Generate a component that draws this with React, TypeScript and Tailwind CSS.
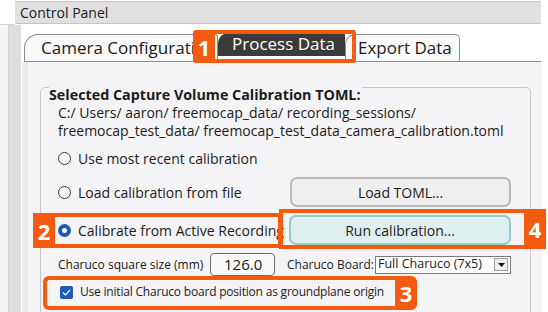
import React from 'react';

const ORANGE = 'border-[#f45b10]';

function Radio({ checked }: { checked?: boolean }) {
  if (checked) {
    return (
      <span className="w-[13px] h-[13px] rounded-full bg-[#1a5bb8] flex items-center justify-center shrink-0">
        <span className="w-[5px] h-[5px] rounded-full bg-white" />
      </span>
    );
  }
  return <span className="w-[13px] h-[13px] rounded-full border border-[#3a3a3a] bg-[#f7f7f7] shrink-0" />;
}

function Callout({ n, className, labelSide = 'left' }: { n: string; className: string; labelSide?: 'left' | 'right' }) {
  return (
    <div className={`absolute flex ${labelSide === 'right' ? 'justify-end' : ''} ${className}`}>
      <div className="w-[22px] h-full bg-[#f45b10] flex items-center justify-center text-white font-bold text-[22px] leading-none">
        {n}
      </div>
    </div>
  );
}

export default function App() {
  return (
    <div
      className="relative w-[548px] h-[312px] bg-white overflow-hidden flex flex-col text-[#1b1b1b]"
      style={{ fontFamily: '"Open Sans", "Noto Sans", sans-serif' }}
    >
      {/* Title strip */}
      <div className="flex h-[25px] shrink-0">
        <div className="w-[15px] border-b border-[#d0d0d0]" />
        <div className="flex-1 mt-[1px] mr-[7px] h-[23px] bg-[#e0e0e0] border-t border-[#c9c9c9] border-b border-b-[#c4c4c4] flex items-center pl-[5px] text-[14px]">
          Control Panel
        </div>
      </div>

      <div className="flex flex-1 min-h-0">
        {/* left dock stripes */}
        <div className="flex w-[22px] shrink-0">
          <div className="w-[9px] bg-[#f4f4f4] border-r border-[#d2d2d2]" />
          <div className="w-[12px] bg-[#dddddd]" />
        </div>

        <div className="flex flex-col w-[519px]">
          {/* tabs */}
          <div className="h-[37px] flex items-end shrink-0 border-b border-[#8c8c8c] ml-[2px]">
            <div className="h-[27px] w-[194px] bg-[#f9f9f9] border border-b-0 border-[#8c8c8c] rounded-tl-[14px] rounded-tr-[3px] pl-[16px] text-[17px] leading-[26px] whitespace-nowrap overflow-hidden">
              Camera Configuration
            </div>
            <div className="h-[23px] w-[127px] mb-[5px] bg-[#3b3b3b] rounded-tl-[10px] text-[17px] leading-[22px] text-white pl-[14px] whitespace-nowrap">
              Process Data
            </div>
            <div className="h-[27px] w-[115px] bg-[#f9f9f9] border border-b-0 border-[#8c8c8c] rounded-tr-[5px] rounded-tl-[10px] pl-[12px] text-[17px] leading-[26px] whitespace-nowrap">
              Export Data
            </div>
          </div>

          {/* content panel */}
          <div className="flex-1 flex">
            <div className="w-[6px] bg-[#ececec]" />
            <div className="flex-1 bg-[#f4f4f6] pt-[25px] pl-[12px] pr-[10px]">
              <div className="border border-[#c6c6c6] rounded-[5px] pl-[17px] pr-[19px] h-[260px] flex flex-col">
                <div className="-mt-[2px] -ml-[9px] self-start bg-[#f4f4f6] pr-[1px] h-[18px] leading-[18px] text-[14.3px] font-bold whitespace-nowrap">
                  Selected Capture Volume Calibration TOML:
                </div>
                <div className="text-[14px] leading-[18px] whitespace-nowrap">
                  C:/ Users/ aaron/ freemocap_data/ recording_sessions/
                </div>
                <div className="text-[14px] leading-[18px] whitespace-nowrap">
                  freemocap_test_data/ freemocap_test_data_camera_calibration.toml
                </div>

                <div className="mt-[9px] h-[18px] flex items-center gap-[7px] text-[14px] whitespace-nowrap">
                  <Radio />
                  Use most recent calibration
                </div>

                <div className="mt-[10px] h-[30px] flex items-center text-[14px] whitespace-nowrap">
                  <div className="w-[232px] flex items-center gap-[7px]">
                    <Radio />
                    Load calibration from file
                  </div>
                  <button className="w-[221px] h-[30px] rounded-[7px] border-2 border-[#b9b9b9] bg-[#efefef] text-[14px]">
                    Load TOML...
                  </button>
                </div>

                <div className="mt-[8px] h-[30px] flex items-center text-[14px] whitespace-nowrap">
                  <div className="w-[231px] flex items-center gap-[7px]">
                    <Radio checked />
                    Calibrate from Active Recording
                  </div>
                  <button className="w-[222px] h-[30px] rounded-[7px] border-2 border-[#8fcfcf] bg-[#dff0f1] text-[14px]">
                    Run calibration...
                  </button>
                </div>

                <div className="mt-[8px] h-[23px] flex items-center text-[12px] whitespace-nowrap">
                  <span className="w-[152px]">Charuco square size (mm)</span>
                  <div className="w-[65px] h-[23px] border border-[#6f6f6f] rounded-[4px] bg-[#f9f9f9] text-[15px] leading-[21px] pl-[13px]">
                    126.0
                  </div>
                  <span className="ml-[12px] w-[88px]">Charuco Board:</span>
                  <div className="w-[136px] h-[18px] border border-[#7a7a7a] bg-white flex items-center pl-[2px] text-[12.5px]">
                    <span className="flex-1">Full Charuco (7x5)</span>
                    <span className="w-[14px] h-[13px] mr-[2px] border border-[#9a9a9a] bg-[#f0f0f0] flex items-center justify-center">
                      <svg width="7" height="4" viewBox="0 0 7 4">
                        <path d="M0 0h7L3.5 4z" fill="#111" />
                      </svg>
                    </span>
                  </div>
                </div>

                <div className="mt-[6px] h-[20px] flex items-center gap-[7px] text-[12px] tracking-[-0.2px] whitespace-nowrap">
                  <span className="w-[13px] h-[13px] ml-[2px] rounded-[2px] bg-[#1a5bb8] flex items-center justify-center">
                    <svg width="9" height="7" viewBox="0 0 9 7">
                      <path d="M1 3.5 L3.5 6 L8 1" stroke="white" strokeWidth="1.2" fill="none" />
                    </svg>
                  </span>
                  Use initial Charuco board position as groundplane origin
                </div>
              </div>
            </div>
          </div>
        </div>
      </div>

      {/* annotation callouts */}
      <Callout n="1" className={`left-[193px] top-[30px] w-[163px] h-[33px] border-[4px] border-l-0 ${ORANGE} rounded-[3px]`} />
      <Callout n="2" className={`left-[33px] top-[213px] w-[249px] h-[35px] border-[4px] border-l-0 ${ORANGE}`} />
      <Callout n="4" labelSide="right" className={`left-[279px] top-[209px] w-[267px] h-[40px] border-[4px] border-r-0 ${ORANGE}`} />
      <Callout n="3" labelSide="right" className={`left-[43px] top-[276px] w-[374px] h-[34px] border-[4px] border-r-0 ${ORANGE} rounded-[6px]`} />
    </div>
  );
}
